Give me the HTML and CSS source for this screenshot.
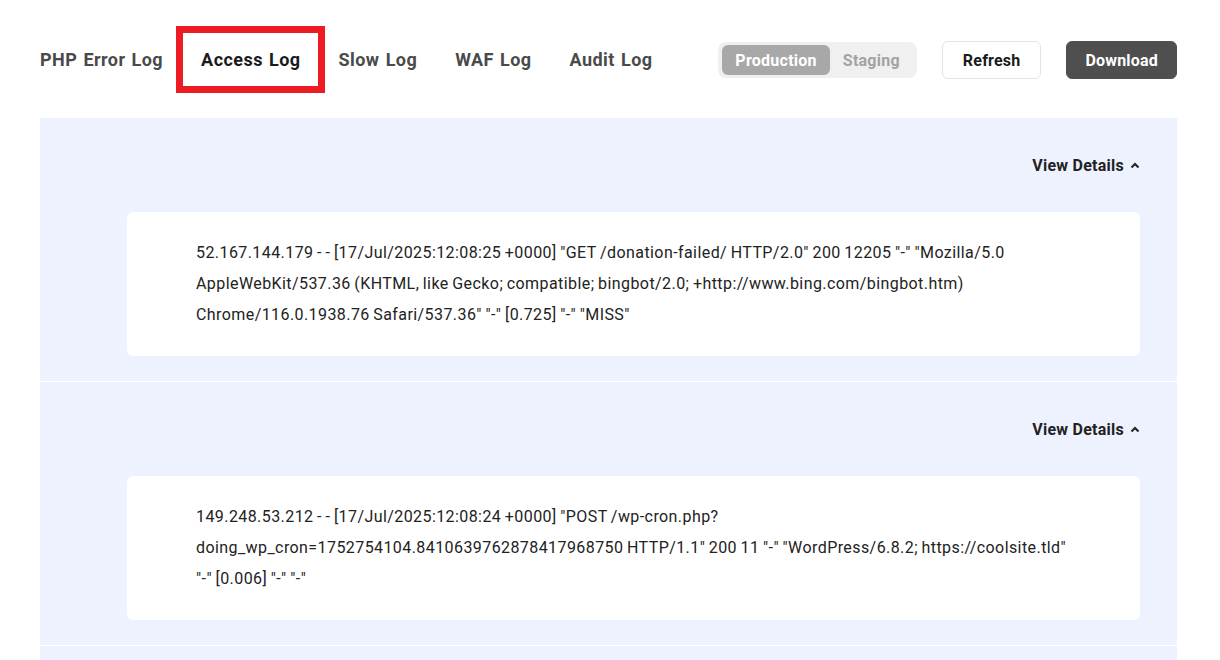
FILE: index.html
```html
<!DOCTYPE html>
<html lang="en">
<head>
  <meta charset="UTF-8">
  <meta name="viewport" content="width=device-width, initial-scale=1.0">
  <title>Logs</title>
  <link rel="stylesheet" href="styles.css">
</head>
<body>

<div class="page">
  <div class="toolbar">
    <nav class="tabs">
      <a href="#" class="tab">PHP Error Log</a>
      <a href="#" class="tab active">Access Log</a>
      <a href="#" class="tab">Slow Log</a>
      <a href="#" class="tab">WAF Log</a>
      <a href="#" class="tab">Audit Log</a>
    </nav>

    <div class="actions">
      <div class="env-switch">
        <button class="env on">Production</button>
        <button class="env">Staging</button>
      </div>
      <button class="btn btn-light">Refresh</button>
      <button class="btn btn-dark">Download</button>
    </div>
  </div>

  <div class="log-list">
    <div class="log-entry">
      <div class="entry-head">
        <a href="#" class="toggle-details">View Details
          <svg width="10" height="7" viewBox="0 0 10 7"><polyline points="1.5,5.5 5,2 8.5,5.5" fill="none" stroke="#222" stroke-width="2"/></svg>
        </a>
      </div>
      <div class="log-card">52.167.144.179 - - [17/Jul/2025:12:08:25 +0000] "GET /donation-failed/ HTTP/2.0" 200 12205 "-" "Mozilla/5.0 AppleWebKit/537.36 (KHTML, like Gecko; compatible; bingbot/2.0; +http://www.bing.com/bingbot.htm) Chrome/116.0.1938.76 Safari/537.36" "-" [0.725] "-" "MISS"</div>
    </div>

    <div class="log-entry">
      <div class="entry-head">
        <a href="#" class="toggle-details">View Details
          <svg width="10" height="7" viewBox="0 0 10 7"><polyline points="1.5,5.5 5,2 8.5,5.5" fill="none" stroke="#222" stroke-width="2"/></svg>
        </a>
      </div>
      <div class="log-card">149.248.53.212 - - [17/Jul/2025:12:08:24 +0000] "POST /wp-cron.php?doing_wp_cron=1752754104.8410639762878417968750 HTTP/1.1" 200 11 "-" "WordPress/6.8.2; https://coolsite.tld" "-" [0.006] "-" "-"</div>
    </div>
  </div>
</div>

</body>
</html>
```

FILE: styles.css
```css
* {
  margin: 0;
  padding: 0;
  box-sizing: border-box;
  font-family: Roboto, 'Liberation Sans', sans-serif;
}

body {
  background: #fff;
  overflow: hidden;
  height: 100vh;
}

.page {
  padding: 40px 43px 0 40px;
}

.toolbar {
  display: flex;
  justify-content: space-between;
  align-items: center;
  height: 40px;
  margin-bottom: 38px;
}

.tabs {
  display: flex;
  align-items: center;
  gap: 38px;
}

.tab {
  position: relative;
  font-size: 18px;
  font-weight: 700;
  letter-spacing: 0.45px;
  word-spacing: 1.2px;
  color: #4a4a4a;
  text-decoration: none;
  line-height: 22px;
}

.tab.active {
  color: #1b1b1b;
}

/* red highlight frame round the chosen tab */
.tab.active::after {
  content: '';
  position: absolute;
  left: -25px;
  right: -24px;
  top: -23px;
  bottom: -22px;
  border: 7px solid #ed1c24;
}

.actions {
  display: flex;
  align-items: center;
  gap: 25px;
}

.env-switch {
  display: flex;
  padding: 3px 4px;
  background: #f0f0f0;
  border-radius: 8px;
}

.env {
  height: 30px;
  padding: 0 13px;
  border: none;
  border-radius: 6px;
  background: transparent;
  font-size: 16px;
  font-weight: 700;
  letter-spacing: 0.25px;
  color: #a3a3a3;
}

.env.on {
  background: #a8a8a8;
  color: #fff;
}

.btn {
  height: 38px;
  padding: 0 20px;
  border-radius: 6px;
  font-size: 16px;
  font-weight: 700;
  letter-spacing: 0.2px;
  cursor: pointer;
}

.btn-light {
  background: #fff;
  border: 1px solid #e3e3e3;
  color: #1b1b1b;
}

.btn-dark {
  background: #4f4f4f;
  border: 1px solid #4f4f4f;
  color: #fff;
  padding: 0 18px;
}

.log-list {
  background: #eef2fe;
  padding-bottom: 60px;
}

.log-entry {
  padding: 37px 37px 25px 87px;
  border-bottom: 1px solid #fff;
}

.entry-head {
  display: flex;
  justify-content: flex-end;
  height: 20px;
  margin-bottom: 37px;
}

.toggle-details {
  display: flex;
  align-items: center;
  gap: 6px;
  font-size: 16px;
  font-weight: 700;
  letter-spacing: 0.25px;
  color: #222;
  text-decoration: none;
}

.log-card {
  background: #fff;
  border-radius: 6px;
  padding: 25px 69px 26px;
  font-size: 16px;
  line-height: 31px;
  letter-spacing: 0.42px;
  word-spacing: -0.8px;
  color: #222;
}
```
